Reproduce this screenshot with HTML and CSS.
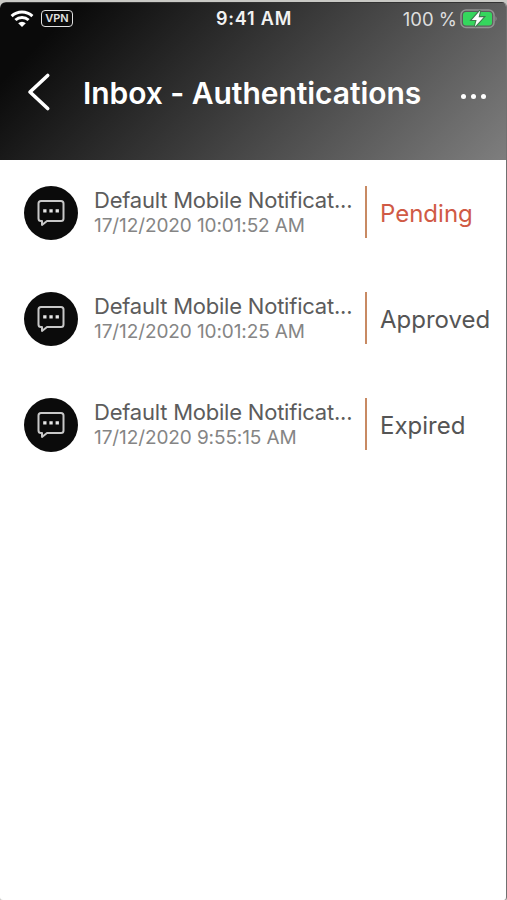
FILE: index.html
```html
<!DOCTYPE html>
<html lang="en">
<head>
    <meta charset="UTF-8">
    <meta name="viewport" content="width=device-width, initial-scale=1.0">
    <title>Inbox - Authentications</title>
    <link rel="stylesheet" href="styles.css">
</head>
<body>
    <div class="phone">
        <header class="header">
            <div class="status-bar">
                <div class="status-left">
                    <svg class="wifi" width="24" height="18" viewBox="0 0 24 18">
                        <path d="M1.6 6.1 A15.2 15.2 0 0 1 22.4 6.1" />
                        <path d="M5.4 10 A9.7 9.7 0 0 1 18.6 10" />
                        <path class="wifi-dot" d="M12 17 L8.2 13.2 A5.5 5.5 0 0 1 15.8 13.2 Z" />
                    </svg>
                    <span class="vpn">VPN</span>
                </div>
                <span class="clock">9:41 AM</span>
                <div class="status-right">
                    <span class="percent">100 %</span>
                    <svg width="38" height="20" viewBox="0 0 38 20">
                        <rect x="1" y="1" width="33" height="17.5" rx="5" fill="none" stroke="#929292" stroke-width="1.5" />
                        <rect x="3" y="3" width="29" height="13.5" rx="3" fill="#35d65d" />
                        <path d="M35.5 7 Q37.7 9.7 35.5 12.5 Z" fill="#929292" />
                        <path d="M20.2 1.6 L11.8 11 H16.6 L14.8 17.8 L23.6 8.2 H18.6 Z" fill="#fff" stroke="#3f7a4e" stroke-width="2.2" paint-order="stroke" />
                    </svg>
                </div>
            </div>
            <div class="nav-bar">
                <svg class="back" width="24" height="40" viewBox="0 0 24 40">
                    <path d="M20.7 3.5 L3 20 L20.7 36.5" />
                </svg>
                <h1 class="title">Inbox - Authentications</h1>
                <div class="more"><i></i><i></i><i></i></div>
            </div>
        </header>
        <main class="list">
            <div class="row">
                <div class="avatar">
                    <svg width="28" height="28" viewBox="0 0 28 28">
                        <path d="M4 2 H24 Q26.5 2 26.5 4.5 V19.5 Q26.5 22 24 22 H10 L5 26 V22 H4 Q1.5 22 1.5 19.5 V4.5 Q1.5 2 4 2 Z" />
                        <path class="dots" d="M6.2 10.2 h3.3 v3.3 h-3.3 Z M12.4 10.2 h3.3 v3.3 h-3.3 Z M18.6 10.2 h3.3 v3.3 h-3.3 Z" />
                    </svg>
                </div>
                <div class="info">
                    <div class="name">Default Mobile Notificat...</div>
                    <div class="date">17/12/2020 10:01:52 AM</div>
                </div>
                <div class="state pending">Pending</div>
            </div>
            <div class="row">
                <div class="avatar">
                    <svg width="28" height="28" viewBox="0 0 28 28">
                        <path d="M4 2 H24 Q26.5 2 26.5 4.5 V19.5 Q26.5 22 24 22 H10 L5 26 V22 H4 Q1.5 22 1.5 19.5 V4.5 Q1.5 2 4 2 Z" />
                        <path class="dots" d="M6.2 10.2 h3.3 v3.3 h-3.3 Z M12.4 10.2 h3.3 v3.3 h-3.3 Z M18.6 10.2 h3.3 v3.3 h-3.3 Z" />
                    </svg>
                </div>
                <div class="info">
                    <div class="name">Default Mobile Notificat...</div>
                    <div class="date">17/12/2020 10:01:25 AM</div>
                </div>
                <div class="state approved">Approved</div>
            </div>
            <div class="row">
                <div class="avatar">
                    <svg width="28" height="28" viewBox="0 0 28 28">
                        <path d="M4 2 H24 Q26.5 2 26.5 4.5 V19.5 Q26.5 22 24 22 H10 L5 26 V22 H4 Q1.5 22 1.5 19.5 V4.5 Q1.5 2 4 2 Z" />
                        <path class="dots" d="M6.2 10.2 h3.3 v3.3 h-3.3 Z M12.4 10.2 h3.3 v3.3 h-3.3 Z M18.6 10.2 h3.3 v3.3 h-3.3 Z" />
                    </svg>
                </div>
                <div class="info">
                    <div class="name">Default Mobile Notificat...</div>
                    <div class="date">17/12/2020 9:55:15 AM</div>
                </div>
                <div class="state expired">Expired</div>
            </div>
        </main>
    </div>
</body>
</html>
```
FILE: styles.css
```css
* {
    box-sizing: border-box;
}
body {
    margin: 0;
    padding-top: 2px;
    height: 900px;
    background: #c9c9c5;
    font-family: Inter, "Liberation Sans", sans-serif;
    overflow: hidden;
}
.phone {
    height: 898px;
    background: #fff;
    border-right: 1px solid #707070;
    border-radius: 6px 5px 3px 3px;
    overflow: hidden;
}
.header {
    height: 158px;
    background: linear-gradient(135deg, #0a0a0a 12%, #3b3b3b 50%, #7e7e7e 100%);
    border-top: 1px solid #333;
    color: #fff;
}
.status-bar {
    display: grid;
    grid-template-columns: 1fr auto 1fr;
    align-items: center;
    height: 31px;
    padding: 0 8px 0 10px;
}
.status-left, .status-right {
    display: flex;
    align-items: center;
}
.status-left {
    gap: 7px;
}
.status-right {
    justify-content: flex-end;
    gap: 3px;
}
.wifi path {
    fill: none;
    stroke: #fff;
    stroke-width: 3;
}
.wifi .wifi-dot {
    fill: #fff;
    stroke: none;
}
.vpn {
    width: 32px;
    height: 17px;
    border: 1.5px solid #e0e0e0;
    border-radius: 4px;
    font-size: 11px;
    font-weight: 600;
    line-height: 15px;
    text-align: center;
    color: #e0e0e0;
}
.clock {
    font-size: 18px;
    font-weight: 600;
    letter-spacing: 0.8px;
    color: #f2f2f2;
}
.percent {
    font-size: 18.5px;
    color: #dedede;
    white-space: nowrap;
}
.nav-bar {
    display: flex;
    align-items: center;
    height: 120px;
    padding: 0 20px 4px 27px;
}
.back path {
    fill: none;
    stroke: #fff;
    stroke-width: 3.6;
    stroke-linecap: round;
    stroke-linejoin: round;
}
.title {
    flex: 1;
    margin: 2px 0 0 32px;
    font-size: 30px;
    font-weight: 600;
    line-height: 40px;
    letter-spacing: -0.05px;
    white-space: nowrap;
}
.more {
    display: flex;
    gap: 5px;
    margin-top: 8px;
}
.more i {
    width: 5px;
    height: 5px;
    border-radius: 50%;
    background: #fff;
}
.row {
    display: flex;
    align-items: center;
    height: 106px;
    padding-left: 24px;
}
.avatar {
    display: flex;
    align-items: center;
    justify-content: center;
    width: 54px;
    height: 54px;
    border-radius: 50%;
    background: #0b0b0b;
}
.avatar path {
    fill: none;
    stroke: #c8c8c8;
    stroke-width: 2;
    stroke-linejoin: round;
}
.avatar .dots {
    fill: #e6e6e6;
    stroke: none;
}
.info {
    width: 271px;
    margin-left: 16px;
    padding-bottom: 2px;
    white-space: nowrap;
}
.name {
    font-size: 22px;
    line-height: 27px;
    letter-spacing: -0.22px;
    color: #5c5c5c;
}
.date {
    font-size: 19px;
    line-height: 24px;
    letter-spacing: -0.1px;
    color: #858585;
}
.state {
    height: 52px;
    margin-bottom: 2px;
    padding-left: 13px;
    border-left: 2px solid #c88a63;
    font-size: 24px;
    line-height: 56px;
    color: #555;
}
.pending {
    color: #d05a45;
}
```
